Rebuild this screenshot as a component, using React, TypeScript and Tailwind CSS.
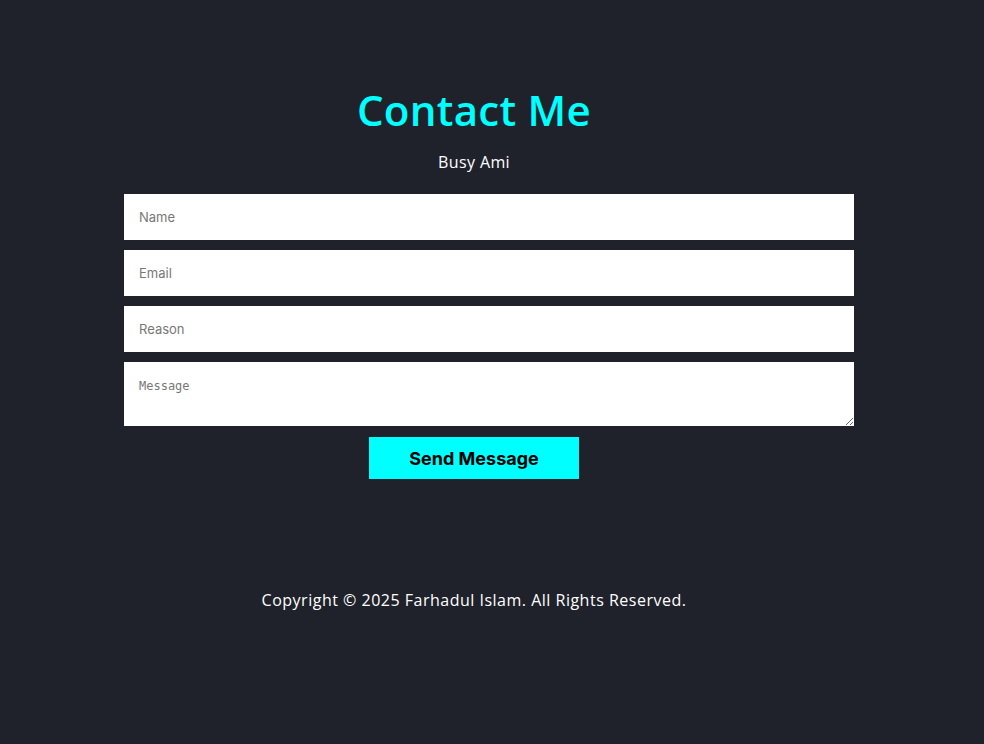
export default function App() {
  return (
    <div className="min-h-[744px] bg-[#1f222b] font-['Open_Sans',sans-serif]">
      <div className="w-[948px] pt-[84px] flex flex-col items-center">
        <h1 className="text-[42px] leading-[52px] font-semibold text-[#00ffff] tracking-[0.3px]">
          Contact Me
        </h1>
        <p className="mt-[16px] text-[16px] leading-[20px] text-white tracking-[0.4px]">Busy Ami</p>
      </div>

      <form className="ml-[124px] mt-[22px] w-[730px] flex flex-col gap-[10px]">
        <input
          type="text"
          placeholder="Name"
          className="h-[46px] bg-white px-[15px] text-[13px] font-['Inter',sans-serif] placeholder:text-[#777] outline-none"
        />
        <input
          type="email"
          placeholder="Email"
          className="h-[46px] bg-white px-[15px] text-[13px] font-['Inter',sans-serif] placeholder:text-[#777] outline-none"
        />
        <input
          type="text"
          placeholder="Reason"
          className="h-[46px] bg-white px-[15px] text-[13px] font-['Inter',sans-serif] placeholder:text-[#777] outline-none"
        />
        <textarea
          placeholder="Message"
          className="block h-[64px] bg-white px-[15px] pt-[16px] text-[12px] leading-[16px] font-['DejaVu_Sans_Mono',monospace] placeholder:text-[#777] outline-none"
        />
      </form>

      <div className="w-[948px] mt-[11px] flex justify-center">
        <button className="w-[210px] h-[42px] bg-[#00ffff] text-black text-[18px] font-bold font-['Inter',sans-serif]">
          Send Message
        </button>
      </div>

      <footer className="w-[948px] mt-[110px] text-center text-white text-[16px] leading-[22px] tracking-[0.5px]">
        Copyright © 2025 Farhadul Islam. All Rights Reserved.
      </footer>
    </div>
  );
}
